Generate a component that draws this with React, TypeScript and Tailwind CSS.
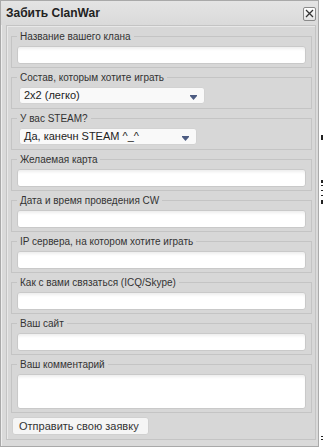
import React from "react";

const font = { fontFamily: '"Liberation Sans", Arial, sans-serif' };

function TextField({ label, tall }: { label: string; tall?: boolean }) {
  return (
    <fieldset className="mt-[3px] border border-[#c4c4c4] px-[5px] pb-[3px] first:mt-0">
      <legend className="px-[3px] text-[10px] leading-[13px] text-[#333333]">{label}</legend>
      <div
        className={
          "mt-[3px] w-full rounded-[3px] border border-[#c9c9c9] bg-white shadow-[inset_0_3px_3px_-1px_rgba(0,0,0,0.07)] " +
          (tall ? "h-[35px]" : "h-[18px]")
        }
      />
    </fieldset>
  );
}

function SelectField({ label, value, width }: { label: string; value: string; width: string }) {
  return (
    <fieldset className="mt-[3px] border border-[#c4c4c4] px-[5px] pb-[4px]">
      <legend className="px-[3px] text-[10px] leading-[13px] text-[#333333]">{label}</legend>
      <div
        className={
          "ml-[2px] mt-[3px] flex h-[17px] items-end justify-between rounded-[3px] border border-[#d2d2d2] bg-[#f9f9f9] pl-[4px] pr-[7px] " +
          width
        }
      >
        <span className="self-center text-[11px] leading-[13px] text-[#222222]">{value}</span>
        <svg width="7" height="5" viewBox="0 0 7 5" className="mb-[3px]">
          <rect x="0" y="0" width="7" height="1" fill="#4d5c82" />
          <path d="M0 1 H7 L3.5 5 Z" fill="#4d5c82" />
        </svg>
      </div>
    </fieldset>
  );
}

export default function App() {
  return (
    <div className="flex h-[447px] w-[323px] bg-white" style={font}>
      <div className="flex h-[447px] w-[319px] flex-col border border-[#a9a9a9] bg-[#dadada] shadow-[inset_1px_1px_0_#eeeeee]">
        <div className="flex h-[24px] items-center justify-between bg-gradient-to-b from-[#e4e4e4] to-[#dadada] pl-[5px] pr-[2px]">
          <span className="text-[12px] font-bold leading-[14px] text-[#222222]">Забить ClanWar</span>
          <div className="mt-[1px] flex h-[14px] w-[13px] items-center justify-center rounded-[2px] border border-[#8a8a8a] bg-gradient-to-b from-white to-[#e2e2e2]">
            <svg width="9" height="9" viewBox="0 0 9 9">
              <path d="M1 1 L8 8 M8 1 L1 8" stroke="#333333" strokeWidth="1.3" />
            </svg>
          </div>
        </div>
        <div className="mb-[6px] ml-[5px] mr-[2px] flex flex-1 flex-col border border-[#c4c4c4] bg-[#d7d7d7] pb-[4px] pl-[4px] pr-[3px] pt-[4px] shadow-[inset_1px_1px_0_#e8e8e8]">
          <TextField label="Название вашего клана" />
          <SelectField label="Состав, которым хотите играть" value="2x2 (легко)" width="w-[186px]" />
          <SelectField label="У вас STEAM?" value="Да, канечн STEAM ^_^" width="w-[178px]" />
          <TextField label="Желаемая карта" />
          <TextField label="Дата и время проведения CW" />
          <TextField label="IP сервера, на котором хотите играть" />
          <TextField label="Как с вами связаться (ICQ/Skype)" />
          <TextField label="Ваш сайт" />
          <TextField label="Ваш комментарий" tall />
          <button className="ml-[1px] mt-[4px] flex h-[18px] w-[137px] items-center whitespace-nowrap rounded-[3px] border border-[#d0d0d0] bg-[#f5f5f5] pl-[6px] text-[11px] leading-[13px] text-[#333333]">
            Отправить свою заявку
          </button>
        </div>
      </div>
      <div className="flex w-[4px] flex-col pl-[2px]">
        <div className="mt-[135px] h-[5px] w-[2px] bg-[#222222]" />
        <div className="mt-[40px] h-[3px] w-[2px] bg-[#222222]" />
        <div className="mt-[2px] h-[1px] w-[2px] bg-[#222222]" />
        <div className="mt-[4px] h-[1px] w-[2px] bg-[#222222]" />
        <div className="mt-[4px] h-[1px] w-[2px] bg-[#222222]" />
        <div className="mt-[4px] h-[4px] w-[2px] bg-[#222222]" />
        <div className="mt-[232px] h-[1px] w-[2px] bg-[#222222]" />
        <div className="mt-[2px] h-[1px] w-[2px] bg-[#222222]" />
      </div>
    </div>
  );
}
